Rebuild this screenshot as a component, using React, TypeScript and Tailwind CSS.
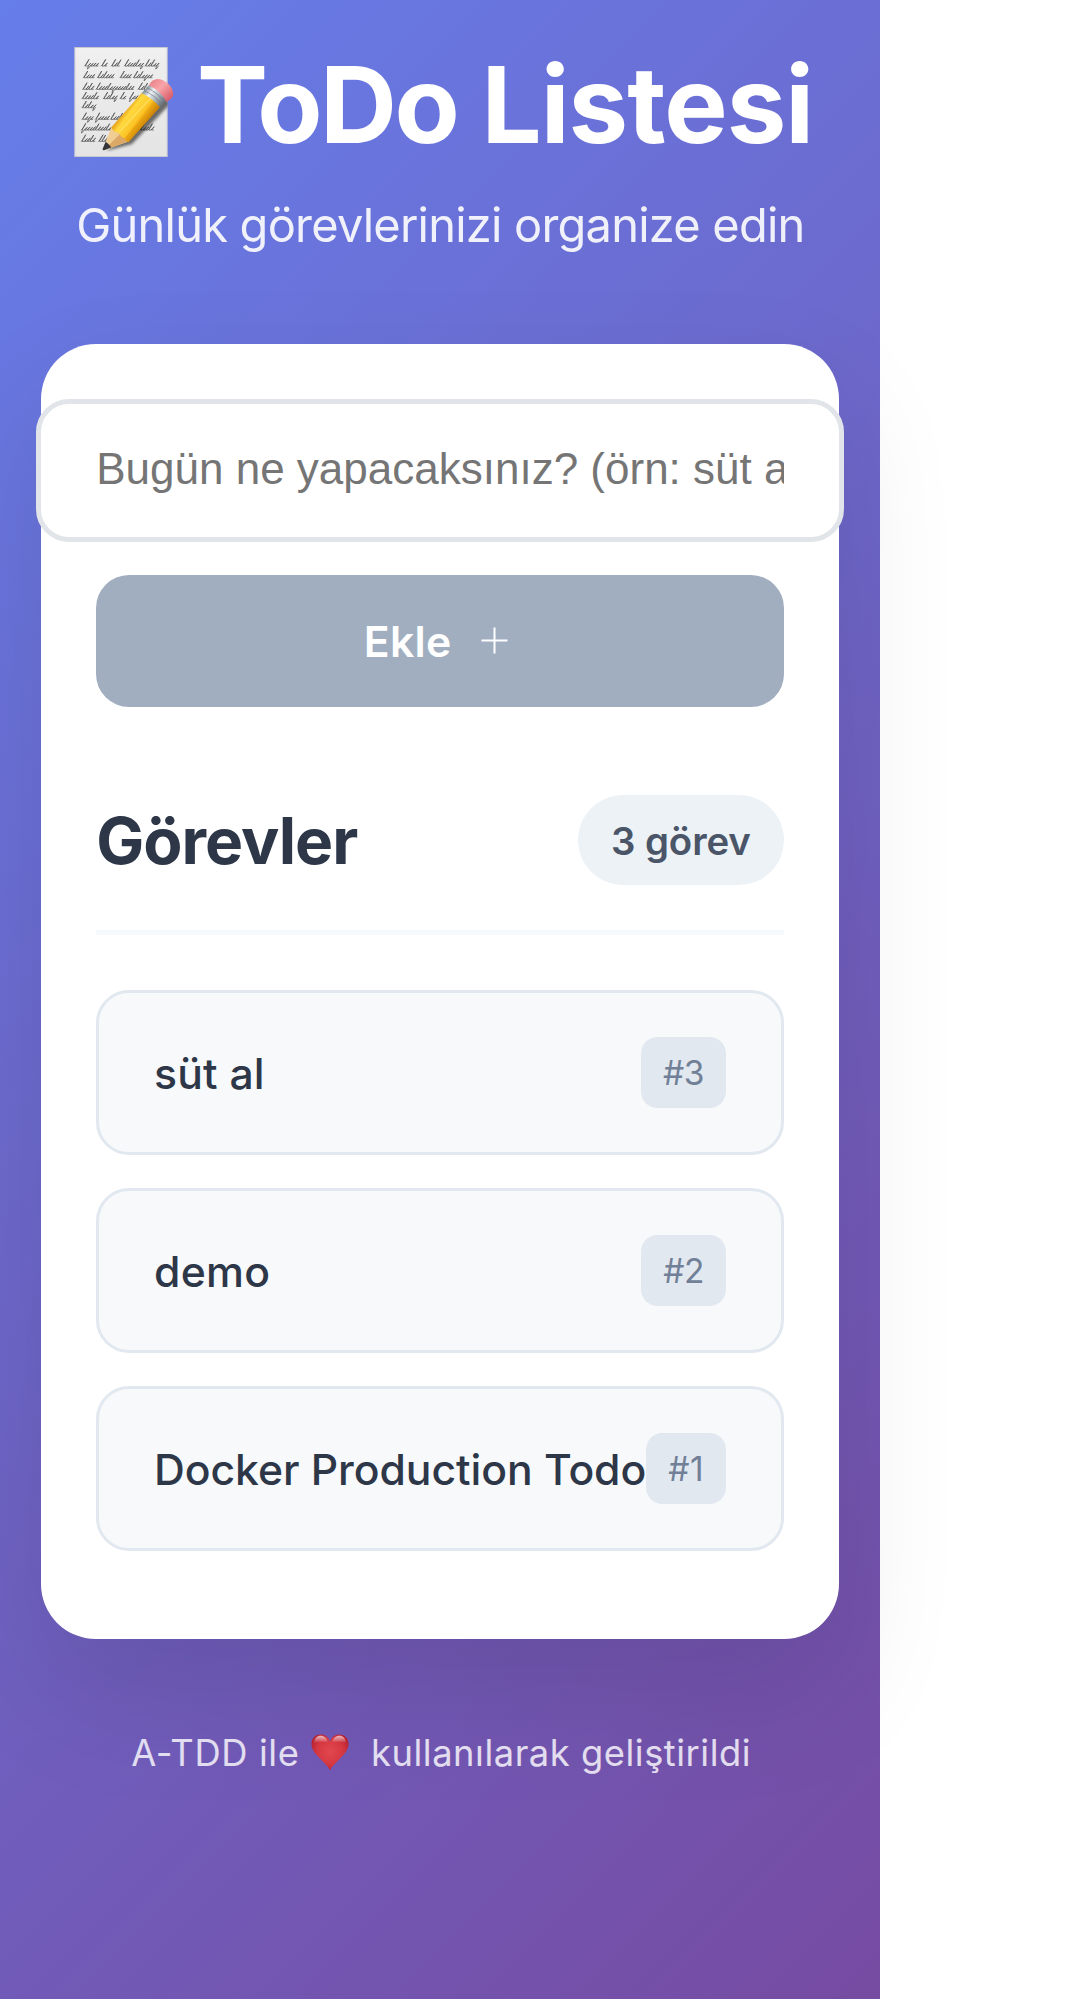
import React from "react";

const todos = [
  { id: 3, title: "süt al", tracking: "tracking-[0.2px]", idTracking: "tracking-[-0.5px]" },
  { id: 2, title: "demo", tracking: "tracking-[0.3px]", idTracking: "tracking-[-0.4px]" },
  { id: 1, title: "Docker Production Todo", tracking: "tracking-[-0.05px]", idTracking: "tracking-[0.4px]" },
];

// Each handwritten line: baseline y followed by [x, width] of its words.
const handwriting: [number, [number, number][]][] = [
  [108, [[74, 40], [124, 18], [154, 26], [193, 52], [255, 36]]],
  [143, [[70, 34], [112, 50], [180, 28], [220, 54]]],
  [178, [[68, 34], [108, 112], [234, 30]]],
  [206, [[66, 50], [130, 36], [180, 18], [208, 34]]],
  [233, [[66, 40]]],
  [268, [[66, 30], [106, 36], [151, 34]]],
  [300, [[64, 90], [240, 42]]],
  [334, [[64, 40], [116, 26]]],
];

function scribble(x: number, y: number, width: number, seed: number) {
  const step = 8;
  const count = Math.max(2, Math.round(width / step));
  let d = `M${x} ${y}`;
  for (let i = 0; i < count; i++) {
    const k = (i * 7 + seed * 3) % 11;
    const rise = i === 0 ? 20 : k === 4 || k === 9 ? 19 : 8 + (k % 3);
    const drop = k === 7 ? 9 : 0;
    d += `q7 ${-rise * 0.4} 8 ${-rise}q-6 ${rise * 0.6} -6 ${rise + drop}q3 1 6 ${-drop}`;
  }
  return d;
}

function MemoIcon() {
  return (
    <svg className="h-[122px] w-[110px] shrink-0" viewBox="30 30 330 366" aria-hidden="true">
      <defs>
        <linearGradient id="paper" x1="0" y1="0" x2="0" y2="1">
          <stop offset="0" stopColor="#f1f1f1" />
          <stop offset="0.15" stopColor="#ededed" />
          <stop offset="1" stopColor="#e4e4e4" />
        </linearGradient>
        <linearGradient id="pencil" gradientUnits="userSpaceOnUse" x1="198" y1="240" x2="256" y2="284">
          <stop offset="0" stopColor="#e9a81c" />
          <stop offset="0.2" stopColor="#ffd83e" />
          <stop offset="0.62" stopColor="#fcc527" />
          <stop offset="0.7" stopColor="#f0ac14" />
          <stop offset="1" stopColor="#c98208" />
        </linearGradient>
        <linearGradient id="ferrule" gradientUnits="userSpaceOnUse" x1="254" y1="178" x2="306" y2="222">
          <stop offset="0" stopColor="#7f8a94" />
          <stop offset="0.3" stopColor="#eef2f5" />
          <stop offset="0.65" stopColor="#aab3bb" />
          <stop offset="1" stopColor="#6b757e" />
        </linearGradient>
        <linearGradient id="eraser" gradientUnits="userSpaceOnUse" x1="280" y1="155" x2="330" y2="205">
          <stop offset="0" stopColor="#ec8a90" />
          <stop offset="0.4" stopColor="#f9a5a9" />
          <stop offset="1" stopColor="#d9606b" />
        </linearGradient>
        <filter id="soft" x="-20%" y="-20%" width="140%" height="140%">
          <feGaussianBlur stdDeviation="4" />
        </filter>
        <clipPath id="sheet">
          <rect x="43" y="51" width="280" height="330" />
        </clipPath>
      </defs>
      <rect x="44.500" y="52.500" width="277" height="327" fill="url(#paper)" stroke="#c9cad0" strokeWidth="3" />
      <g fill="none" stroke="#4b4b4b" strokeWidth="2" strokeLinecap="round" strokeLinejoin="round">
        {handwriting.map(([y, words], line) =>
          words.map(([x, w], i) => (
            <path key={`${line}-${i}`} d={scribble(x, y, w, line + i)} transform={`skewX(-14) translate(${y * 0.25} 0)`} />
          ))
        )}
      </g>
      <g clipPath="url(#sheet)">
        <path d="M140 362L216 342L330 222L316 200Z" fill="#000" opacity="0.550" filter="url(#soft)" />
      </g>
      <path d="M155 290L129 356Q128 361 134 360L208 334Z" fill="#f0cd92" />
      <path d="M180 312L132 360L208 334Z" fill="#dba965" />
      <path d="M137 335L128 356Q127 362 134 360L154 352Q146 341 137 335Z" fill="#33353a" />
      <path d="M154 292L247 187Q280 200 301 230L207 335Q198 337 194 324Q184 325 178 309Q160 308 154 292Z" fill="url(#pencil)" />
      <path d="M178 306L272 204" stroke="#ffe468" strokeWidth="5" fill="none" opacity="0.700" />
      <path d="M197 325L289 219" stroke="#e09a0c" strokeWidth="3" fill="none" opacity="0.700" />
      <path d="M245 190L267 165Q304 180 320 209L300 232Q276 204 245 190Z" fill="url(#ferrule)" />
      <path d="M252 182Q286 197 307 224M260 173Q293 188 314 216" fill="none" stroke="#6d7882" strokeWidth="2" />
      <path d="M267 166Q275 147 294 147Q312 149 328 165Q342 181 339 195Q337 207 319 215Q303 184 267 166Z" fill="url(#eraser)" />
    </svg>
  );
}

function HeartIcon() {
  return (
    <svg className="h-[37px] w-[38px] shrink-0" viewBox="0 0 38 37" aria-hidden="true">
      <defs>
        <radialGradient id="heart" cx="0.500" cy="0.480" r="0.580">
          <stop offset="0" stopColor="#e2474f" />
          <stop offset="0.6" stopColor="#d63841" />
          <stop offset="1" stopColor="#b5202f" />
        </radialGradient>
        <linearGradient id="shine" x1="0" y1="0" x2="0" y2="1">
          <stop offset="0" stopColor="#fff" stopOpacity="0.700" />
          <stop offset="1" stopColor="#fff" stopOpacity="0" />
        </linearGradient>
      </defs>
      <path
        d="M19 36.500C17.500 32.500 13 29 8.500 24C4 19.200 0.500 15.500 0.500 10C0.500 4.500 4.300 0.500 9.500 0.500C14 0.500 17.500 3 19 7.500C20.500 3 24 0.500 28.500 0.500C33.700 0.500 37.500 4.500 37.500 10C37.500 15.500 34 19.200 29.500 24C25 29 20.500 32.500 19 36.500Z"
        fill="url(#heart)"
      />
      <path d="M3 9C3.500 4 6 1.700 9.500 1.700C13.500 1.700 15.800 4 16.800 8C13 7.500 7 7.500 3 9ZM21.200 8C22.200 4 24.500 1.700 28.500 1.700C32 1.700 34.500 4 35 9C31 7.500 25 7.500 21.200 8Z" fill="url(#shine)" />
    </svg>
  );
}

export default function App() {
  return (
    <div className="h-[1999px] w-[1081px] overflow-hidden bg-white font-['Inter',sans-serif]">
      <div className="flex h-[1999px] w-[880px] flex-col bg-[linear-gradient(135deg,#667eea_0%,#764ba2_100%)] px-[41.25px]">
        <header className="h-[343.5px] shrink-0 pt-10 text-white">
          <h1 className="ml-[28.75px] flex items-start gap-[17px]">
            <MemoIcon />
            <span className="mt-[7px] whitespace-nowrap text-[106.5px] font-bold leading-[115px] tracking-[-1px]">
              <span className="tracking-[-2.5px]">ToDo</span> Listesi
            </span>
          </h1>
          <p className="ml-[35px] mt-[32.500px] whitespace-nowrap text-[47px] leading-[60px] tracking-[-0.78px] opacity-90">
            Günlük görevlerinizi organize edin
          </p>
        </header>

        <main className="h-[1295.25px] shrink-0 rounded-[55px] bg-white px-[55px] pt-[55px] shadow-[0_55px_124px_rgba(0,0,0,0.105)]">
          <form className="flex flex-col gap-[33px]" onSubmit={(e) => e.preventDefault()}>
            <input
              type="text"
              placeholder="Bugün ne yapacaksınız? (örn: süt al)"
              className="-mx-[60.500px] h-[143px] rounded-[33px] border-[5px] border-[#e1e5e9] bg-white px-[55.500px] pb-[3px] font-['Liberation_Sans',sans-serif] text-[44px] text-[#2d3748] outline-none placeholder:text-[#757575]"
            />
            <button
              type="submit"
              className="flex h-[132px] items-center rounded-[33px] bg-[#a0aec0] pl-[267.500px] text-[42.700px] font-semibold tracking-[0.35px] text-white"
            >
              <span className="pt-[2px] leading-[60px]">Ekle</span>
              <svg className="ml-[29.500px] size-[27px]" viewBox="0 0 27 27" fill="none" stroke="#fff" strokeWidth="2" aria-hidden="true">
                <path d="M13.500 0.500V26.500M0.500 13.500H26.500" />
              </svg>
            </button>
          </form>

          <section>
            <div className="mt-[88px] flex h-[140.25px] items-start justify-between border-b-[5px] border-[#f7fafc]">
              <h2 className="pt-px text-[64px] font-bold leading-[90px] tracking-[-0.98px] text-[#2d3748]">Görevler</h2>
              <span className="rounded-full bg-[#edf2f7] px-[33px] pt-[2px] text-[38.400px] font-semibold leading-[88.75px] tracking-[-0.1px] text-[#4a5568]">3 görev</span>
            </div>
            <ul className="mt-[55px] flex flex-col gap-[33px]">
              {todos.map((todo) => (
                <li key={todo.id} className="flex h-[165px] items-center justify-between rounded-[33px] border-[3px] border-[#e2e8f0] bg-[#f8f9fb] px-[54.750px]">
                  <span className={`min-w-0 whitespace-nowrap pt-[2.500px] text-[42.700px] font-medium leading-[62px] text-[#2d3748] ${todo.tracking}`}>{todo.title}</span>
                  <span className={`shrink-0 rounded-[16.500px] bg-[#e2e8f0] px-[22px] pt-px text-[33.500px] leading-[70.500px] text-[#718096] ${todo.idTracking}`}>#{todo.id}</span>
                </li>
              ))}
            </ul>
          </section>
        </main>

        <footer className="ml-[90px] mt-[89px] flex h-[50px] items-center whitespace-nowrap text-[36.300px] leading-[50px] text-white/80">
          <span className="tracking-[0.63px]">A-TDD ile</span>
          <span className="ml-[11px] flex">
            <HeartIcon />
          </span>
          <span className="ml-[22.500px] tracking-[0.54px]">kullanılarak geliştirildi</span>
        </footer>
      </div>
    </div>
  );
}
